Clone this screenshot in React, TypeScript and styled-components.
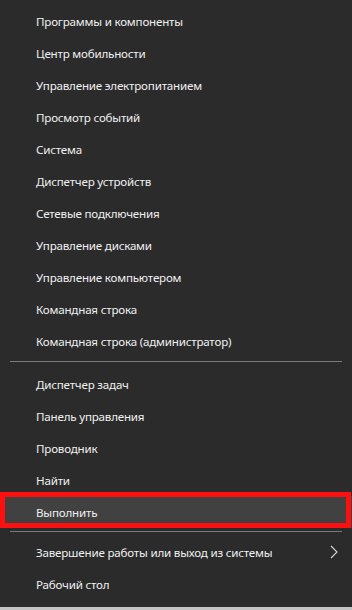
import styled, { createGlobalStyle } from 'styled-components';

const GlobalStyle = createGlobalStyle`
  html, body {
    margin: 0;
    padding: 0;
    background: #2b2b2b;
  }
  * {
    box-sizing: border-box;
  }
`;

const Menu = styled.div`
  display: flex;
  flex-direction: column;
  width: 352px;
  height: 610px;
  padding-top: 5px;
  background: #2b2b2b;
  font-family: "Noto Sans", "Open Sans", sans-serif;
  font-size: 11.6px;
  letter-spacing: -0.2px;
  color: #f0f0f0;
`;

const Item = styled.div<{ $active?: boolean }>`
  position: relative;
  display: flex;
  align-items: center;
  justify-content: space-between;
  height: 32px;
  padding: 0 14px 0 36px;
  background: ${(p) => (p.$active ? '#414141' : 'transparent')};
  cursor: default;

  ${(p) =>
    p.$active &&
    `
    &::after {
      content: '';
      position: absolute;
      left: 0;
      right: 1px;
      top: -4px;
      bottom: 0;
      border: 5px solid #ff1010;
      pointer-events: none;
    }
  `}
`;

const Separator = styled.div<{ $tight?: boolean }>`
  height: 1px;
  margin: ${(p) => (p.$tight ? '3px 10px 4px' : '4px 10px 6px')};
  background: #7b7b7b;
`;

const Spacer = styled.div`
  flex: 1;
`;

const BottomEdge = styled.div`
  height: 3px;
  background: #c4c4c4;
`;

const Chevron = () => (
  <svg width="8" height="14" viewBox="0 0 8 14" fill="none">
    <path d="M1 1l6 6-6 6" stroke="#d6d6d6" strokeWidth="1.1" />
  </svg>
);

const topItems = [
  'Программы и компоненты',
  'Центр мобильности',
  'Управление электропитанием',
  'Просмотр событий',
  'Система',
  'Диспетчер устройств',
  'Сетевые подключения',
  'Управление дисками',
  'Управление компьютером',
  'Командная строка',
  'Командная строка (администратор)',
];

const middleItems = ['Диспетчер задач', 'Панель управления', 'Проводник', 'Найти'];

const App = () => {
  return (
    <>
      <GlobalStyle />
      <Menu>
        {topItems.map((label) => (
          <Item key={label}>{label}</Item>
        ))}
        <Separator />
        {middleItems.map((label) => (
          <Item key={label}>{label}</Item>
        ))}
        <Item $active>Выполнить</Item>
        <Separator $tight />
        <Item>
          Завершение работы или выход из системы
          <Chevron />
        </Item>
        <Item>Рабочий стол</Item>
        <Spacer />
        <BottomEdge />
      </Menu>
    </>
  );
};

export default App;
